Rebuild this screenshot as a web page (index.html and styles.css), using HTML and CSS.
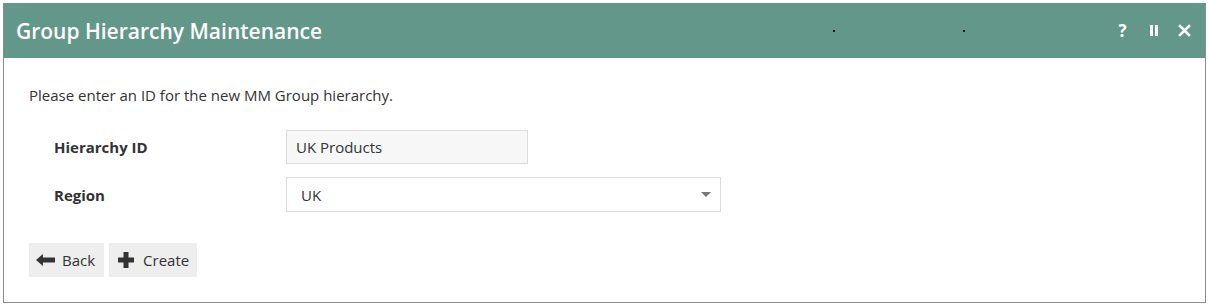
FILE: index.html
```html
<!DOCTYPE html>
<html>
<head>
<meta charset="utf-8">
<link rel="stylesheet" href="styles.css">
</head>
<body>
<div class="panel">
  <div class="header">
    <h1 class="title">Group Hierarchy Maintenance</h1>
    <span class="dot dot-a"></span>
    <span class="dot dot-b"></span>
    <div class="tools">
      <span class="tool help">?</span>
      <span class="tool pause"><svg width="10" height="13" viewBox="0 0 10 13"><rect x="1" y="1" width="3" height="11" fill="#fff"/><rect x="6" y="1" width="3" height="11" fill="#fff"/></svg></span>
      <span class="tool close"><svg width="13" height="13" viewBox="0 0 13 13"><path d="M2 2 L11 11 M11 2 L2 11" stroke="#fff" stroke-width="2.6" stroke-linecap="square"/></svg></span>
    </div>
  </div>
  <div class="body">
    <p class="intro">Please enter an ID for the new MM Group hierarchy.</p>
    <div class="form">
      <div class="row">
        <label class="label">Hierarchy ID</label>
        <div class="input">UK Products</div>
      </div>
      <div class="row">
        <label class="label">Region</label>
        <div class="select"><span>UK</span><span class="caret"></span></div>
      </div>
    </div>
    <div class="buttons">
      <button class="btn btn-back"><svg width="20" height="14" viewBox="0 0 20 14"><path d="M0 7 L7 1 L7 4.5 L19 4.5 L19 9.5 L7 9.5 L7 13 Z" fill="#333"/></svg>Back</button>
      <button class="btn btn-create"><svg width="16" height="16" viewBox="0 0 16 16"><path d="M5.5 0 H10.5 V5.5 H16 V10.5 H10.5 V16 H5.5 V10.5 H0 V5.5 H5.5 Z" fill="#333"/></svg>Create</button>
    </div>
  </div>
</div>
</body>
</html>
```
FILE: styles.css
```css
* { box-sizing: border-box; }
html, body { margin: 0; padding: 0; background: #fff; }
body { font-family: "Open Sans", "Liberation Sans", sans-serif; color: #333; }
.panel {
  margin: 3px 3px 0 3px;
  height: 300px;
  border: 1px solid #8c8c8c;
  border-top: none;
  background: #fff;
}
.header {
  position: relative;
  height: 55px;
  background: #62978a;
  display: flex;
  align-items: center;
  padding: 0 5px 0 12px;
}
.title {
  margin: 0;
  font-size: 21px;
  font-weight: 600;
  color: #fff;
  flex: 1;
}
.dot { position: absolute; width: 2px; height: 2px; background: #1c1c1c; top: 27px; }
.dot-a { left: 829px; }
.dot-b { left: 959px; }
.tools { display: flex; align-items: center; }
.tool { color: #fff; font-weight: 700; font-size: 17px; display: flex; align-items: center; justify-content: center; width: 31px; height: 24px; }
.body { padding: 27px 25px 0 25px; }
.intro { margin: 0; font-size: 15px; line-height: 20px; }
.form { padding: 25px 0 0 25px; }
.row { display: flex; align-items: center; margin-bottom: 13px; }
.label { width: 232px; font-weight: 700; font-size: 15px; }
.input {
  width: 242px; height: 34px;
  background: #f7f7f7; border: 1px solid #dcdcdc;
  font-size: 15px; line-height: 32px; padding: 0 9px;
}
.select {
  width: 435px; height: 35px;
  background: #fff; border: 1px solid #dcdcdc;
  font-size: 15px; padding: 0 9px 0 14px;
  display: flex; align-items: center; justify-content: space-between;
}
.caret { width: 0; height: 0; border-left: 5px solid transparent; border-right: 5px solid transparent; border-top: 5px solid #777; }
.buttons { display: flex; gap: 5px; padding-top: 18px; }
.btn {
  font-family: inherit; font-size: 15px; color: #333;
  background: #eee; border: none; height: 34px;
  display: flex; align-items: center;
}
.btn-back { padding: 0 9px 0 7px; gap: 6px; }
.btn-create { padding: 0 8px 0 9px; gap: 9px; }
```
